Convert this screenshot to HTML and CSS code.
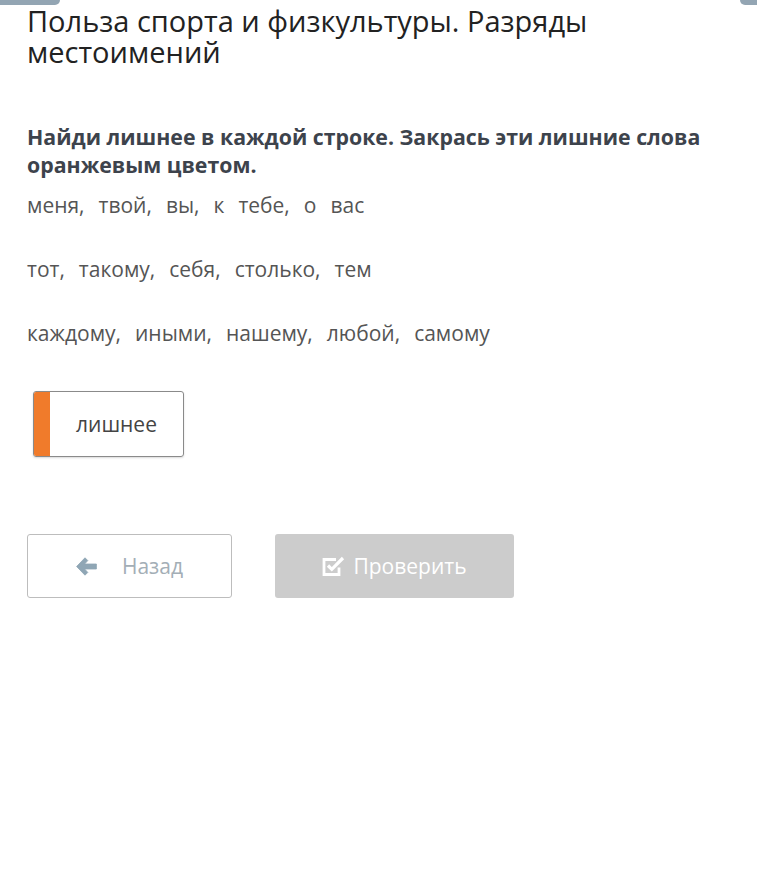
FILE: index.html
```html
<!DOCTYPE html>
<html lang="ru">
<head>
    <meta charset="UTF-8">
    <meta name="viewport" content="width=device-width, initial-scale=1.0">
    <title>Польза спорта и физкультуры. Разряды местоимений</title>
    <link rel="stylesheet" href="styles.css">
</head>
<body>
    <div class="tab tab-left"></div>
    <div class="tab tab-right"></div>

    <div class="container">
        <h1 class="lesson-title">Польза спорта и физкультуры. Разряды местоимений</h1>

        <div class="task">
            <p class="task-text">Найди лишнее в каждой строке. Закрась эти лишние слова оранжевым цветом.</p>

            <div class="word-rows">
                <div class="word-row">
                    <span class="word">меня,</span>
                    <span class="word">твой,</span>
                    <span class="word">вы,</span>
                    <span class="word">к</span>
                    <span class="word">тебе,</span>
                    <span class="word">о</span>
                    <span class="word">вас</span>
                </div>
                <div class="word-row">
                    <span class="word">тот,</span>
                    <span class="word">такому,</span>
                    <span class="word">себя,</span>
                    <span class="word">столько,</span>
                    <span class="word">тем</span>
                </div>
                <div class="word-row">
                    <span class="word">каждому,</span>
                    <span class="word">иными,</span>
                    <span class="word">нашему,</span>
                    <span class="word">любой,</span>
                    <span class="word">самому</span>
                </div>
            </div>

            <div class="palette">
                <div class="color-chip">
                    <span class="chip-mark"></span>
                    <span class="chip-label">лишнее</span>
                </div>
            </div>
        </div>

        <div class="actions">
            <button class="btn btn-back" type="button">
                <svg class="btn-icon" width="21" height="19" viewBox="0 0 21 19">
                    <path d="M9 0.8 L0.6 9.5 L9 18.2 L11.8 15.4 L8.6 12 L20.4 12 L20.4 7 L8.6 7 L11.8 3.6 Z" fill="#8fa6b5" stroke="#8fa6b5" stroke-width="0.8" stroke-linejoin="round"/>
                </svg>
                <span>Назад</span>
            </button>
            <button class="btn btn-check" type="button" disabled>
                <svg class="btn-icon" width="24" height="21" viewBox="0 0 24 21">
                    <path d="M17 11.5 V18.5 H2 V3.5 H14" fill="none" stroke="#fff" stroke-width="2.8"/>
                    <path d="M6 9.5 L9.8 13.3 L21 2" fill="none" stroke="#fff" stroke-width="3.2"/>
                </svg>
                <span>Проверить</span>
            </button>
        </div>
    </div>
</body>
</html>
```

FILE: styles.css
```css
:root {
    --text: #222;
    --text-soft: #555;
    --task: #3d434c;
    --orange: #f07b2b;
    --tab: #93a5b3;
}

* {
    margin: 0;
    padding: 0;
    box-sizing: border-box;
}

body {
    font-family: "Open Sans", sans-serif;
    background: #fff;
    color: var(--text);
    min-height: 100vh;
}

.tab {
    position: absolute;
    top: 0;
    height: 5px;
    background: var(--tab);
}

.tab-left {
    left: 0;
    width: 60px;
    border-bottom-right-radius: 5px;
}

.tab-right {
    right: 0;
    width: 17px;
    border-bottom-left-radius: 6px;
}

.container {
    padding: 5px 27px 40px;
}

.lesson-title {
    font-size: 29px;
    font-weight: 400;
    line-height: 31px;
    color: var(--text);
    margin-bottom: 56px;
}

.task-text {
    font-size: 21.3px;
    font-weight: 700;
    line-height: 28px;
    color: var(--task);
    margin-bottom: 12px;
}

.word-rows {
    display: flex;
    flex-direction: column;
    gap: 36px;
}

.word-row {
    display: flex;
    gap: 14px;
    font-size: 21px;
    line-height: 28px;
    color: var(--text-soft);
}

.palette {
    margin-top: 44px;
    padding-left: 6px;
}

.color-chip {
    display: inline-flex;
    align-items: stretch;
    width: 151px;
    height: 66px;
    border: 1px solid #8a8a8a;
    border-radius: 3px;
    overflow: hidden;
    box-shadow: 0 1px 2px rgba(0, 0, 0, 0.15);
}

.chip-mark {
    width: 16px;
    background: var(--orange);
}

.chip-label {
    flex-grow: 1;
    display: flex;
    align-items: center;
    justify-content: center;
    font-size: 21px;
    color: #444;
}

.actions {
    display: flex;
    gap: 43px;
    margin-top: 73px;
}

.btn {
    display: inline-flex;
    align-items: center;
    justify-content: center;
    height: 64px;
    border-radius: 3px;
    font-family: "Open Sans", sans-serif;
    font-size: 21px;
    cursor: pointer;
}

.btn-back {
    width: 205px;
    background: #fff;
    border: 1px solid #bdbdbd;
    color: #a3aeb6;
    gap: 25px;
}

.btn-check {
    width: 239px;
    background: #cccccc;
    border: none;
    color: #fff;
    gap: 7px;
    cursor: not-allowed;
}

.btn-icon {
    display: block;
}
```
